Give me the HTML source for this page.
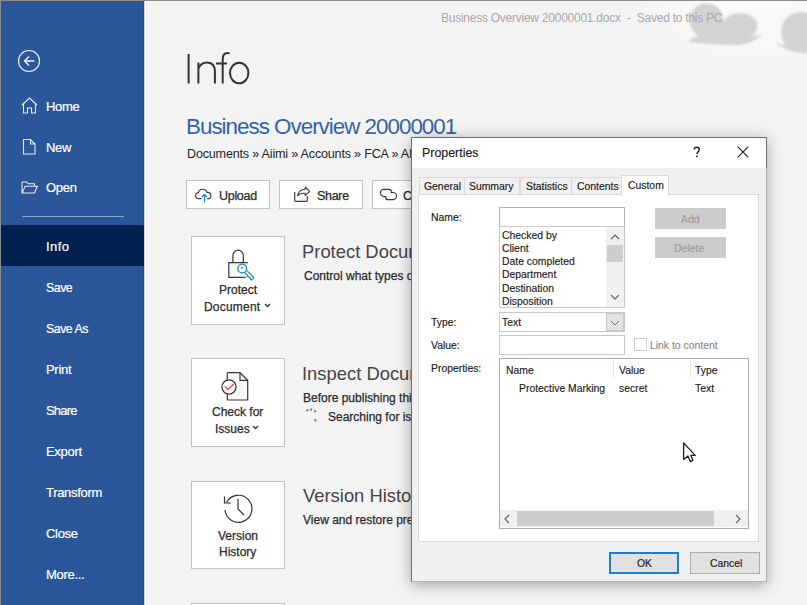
<!DOCTYPE html>
<html><head><meta charset="utf-8">
<style>
*{margin:0;padding:0;box-sizing:border-box}
html,body{width:807px;height:605px;overflow:hidden;background:#f3f3f3;font-family:"Liberation Sans",sans-serif}
.a{position:absolute;white-space:nowrap}
.t{position:absolute;white-space:nowrap;line-height:1}
#frame{position:absolute;left:0;top:0;width:807px;height:605px;border-top:1px solid #8c8c8c;border-left:1px solid #8c8c8c;pointer-events:none;z-index:50}
#side{position:absolute;left:0;top:0;width:144px;height:605px;background:#2b579a;border-right:1px solid #1d4c93}
#side .t{left:46px;color:#fff;font-size:13px;letter-spacing:-0.3px;-webkit-text-stroke:0.2px #fff}
.sel{position:absolute;left:0;top:225px;width:144px;height:41px;background:#002050}
.box{position:absolute;left:191px;width:94px;height:89px;background:#fff;border:1px solid #c3c3c3}
.bt{position:absolute;color:#2a2a2a;-webkit-text-stroke:0.25px #2a2a2a;font-size:12px;line-height:1;white-space:nowrap}
.h1{position:absolute;color:#454545;font-size:18.4px;line-height:1;white-space:nowrap}
.p{position:absolute;color:#2a2a2a;-webkit-text-stroke:0.25px #2a2a2a;font-size:12px;line-height:1;white-space:nowrap}
.btn{position:absolute;top:180px;height:29px;border:1px solid #c3c3c3;background:#fff}
#dlg{position:absolute;left:411px;top:137px;width:356px;height:445px;background:#f0f0f0;box-shadow:0 3px 14px rgba(0,0,0,.33);z-index:10}
#dlgb{position:absolute;left:0;top:0;width:356px;height:445px;border:1px solid #6e6e6e;border-right-color:#b4b4b4;border-bottom-color:#b4b4b4;z-index:5}
#dlg .t{font-size:10.4px;color:#1a1a1a;margin-top:1px;-webkit-text-stroke:0.15px currentColor}
</style></head><body>
<!-- background clouds -->
<svg class="a" style="left:600px;top:1px" width="207" height="110" viewBox="600 1 207 110">
  <defs><filter id="bl" x="-20%" y="-20%" width="140%" height="140%"><feGaussianBlur stdDeviation="0.8"/></filter>
  <radialGradient id="hz" cx="0.55" cy="0.25" r="0.6"><stop offset="0" stop-color="#fbfbfb"/><stop offset="0.6" stop-color="#f8f8f8"/><stop offset="1" stop-color="#f3f3f3" stop-opacity="0"/></radialGradient></defs>
  <ellipse cx="740" cy="30" rx="110" ry="75" fill="url(#hz)"/>
  <g fill="#d3d3d3" filter="url(#bl)">
    <circle cx="706.5" cy="20.5" r="17"/>
    <ellipse cx="740" cy="26" rx="17.5" ry="13"/>
    <ellipse cx="722" cy="30" rx="12" ry="8"/>
    <path d="M688 42Q698 32 720 35Q745 40 762 34Q752 46 730 45Q705 44 688 42z"/>
    <circle cx="801" cy="32" r="20"/>
    <path d="M775 43Q790 47 807 44V53Q790 54 775 43z"/>
  </g>
</svg>
<div class="t" style="left:441px;top:12px;font-size:12px;color:#a8a8a8;letter-spacing:-0.25px">Business Overview 20000001.docx&nbsp; - &nbsp;Saved to this PC</div>

<div id="side">
  <svg class="a" style="left:17px;top:49px" width="24" height="24" viewBox="0 0 24 24"><circle cx="12" cy="12" r="10.5" fill="none" stroke="#e8edf5" stroke-width="1.2"/><path d="M7.5 12h10M12 7.5l-4.5 4.5 4.5 4.5" fill="none" stroke="#eef2f8" stroke-width="1.3"/></svg>
  <svg class="a" style="left:21px;top:97px" width="17" height="17" viewBox="0 0 17 17"><path d="M1 8l7.5-7 7.5 7M2.5 6.5V16h4v-5h4v5h4V6.5" fill="none" stroke="#e4e9f2" stroke-width="1.1"/></svg>
  <div class="t" style="top:100px">Home</div>
  <svg class="a" style="left:22px;top:138px" width="15" height="17" viewBox="0 0 15 17"><path d="M1.5 1.5h7l4.5 4.5v10h-11.5z M8.5 1.5v4.5h4.5" fill="none" stroke="#e4e9f2" stroke-width="1.1"/></svg>
  <div class="t" style="top:141px">New</div>
  <svg class="a" style="left:21px;top:181px" width="17" height="13" viewBox="0 0 17 13"><path d="M1 1h4.5l1.8 1.8h6.2v2.5 M1 1v11h12.5l2.8-6.7H4.2L1 12" fill="none" stroke="#e4e9f2" stroke-width="1.1"/></svg>
  <div class="t" style="top:181px">Open</div>
  <div class="a" style="left:22px;top:216px;width:102px;height:1px;background:#8aa6cf"></div>
  <div class="sel"></div>
  <div class="t" style="top:240px;letter-spacing:0.4px">Info</div>
  <div class="t" style="top:282px;letter-spacing:-0.5px;font-size:12.4px">Save</div>
  <div class="t" style="top:323px;letter-spacing:-0.5px;font-size:12.4px">Save As</div>
  <div class="t" style="top:363px">Print</div>
  <div class="t" style="top:404px;letter-spacing:-0.8px">Share</div>
  <div class="t" style="top:445px">Export</div>
  <div class="t" style="top:486px">Transform</div>
  <div class="t" style="top:527px">Close</div>
  <div class="t" style="top:568px">More...</div>
</div>
<div class="a" style="left:144px;top:0;width:1px;height:605px;background:#c5d0e0"></div>
<div class="a" style="left:145px;top:0;width:1px;height:605px;background:#fff"></div>

<!-- Info title -->
<svg class="a" style="left:186px;top:50px" width="70" height="36" viewBox="0 0 70 36">
  <g fill="none" stroke="#333" stroke-width="2">
    <path d="M2.6 4v29.5"/>
    <path d="M12.4 12.5v21M12.4 18.5C14.2 14.8 17 12.6 20.8 12.6C26 12.6 28.9 15.4 28.9 21.2v12.3"/>
    <path d="M36.7 33.5V9.2C36.7 5 38.6 3 41.6 3c.9 0 1.5.2 2 .4M30 13.6h11"/>
    <ellipse cx="53.2" cy="23" rx="9.2" ry="10.3"/>
  </g>
</svg>
<div class="t" style="left:186px;top:116px;font-size:22.4px;color:#3563a6;letter-spacing:-1px">Business Overview 20000001</div>
<div class="t" style="left:187px;top:148px;font-size:12.6px;color:#262626;letter-spacing:-0.2px">Documents » Aiimi » Accounts » FCA » AI</div>

<div class="btn" style="left:186px;width:84px"></div>
<svg class="a" style="left:190px;top:182px" width="25" height="25" viewBox="0 0 25 25"><path d="M11.5 16.6H9A3 3 0 0 1 8.3 10.6A4.5 4.5 0 0 1 17 10.5A3 3 0 0 1 18.5 16.6H17.3" fill="none" stroke="#3a3a3a" stroke-width="1.15"/><path d="M14.5 20.5V12.6M12 15.1l2.5-2.5 2.5 2.5" fill="none" stroke="#1e88d0" stroke-width="1.4"/></svg>
<div class="bt" style="left:219px;top:190px;font-size:12.5px;color:#262626;letter-spacing:-0.3px">Upload</div>
<div class="btn" style="left:279px;width:84px"></div>
<svg class="a" style="left:290px;top:182px" width="25" height="25" viewBox="0 0 25 25"><path d="M4.75 10.1V18.6q0 .8.8.8H16.5q.8 0 .8-.8V14" fill="none" stroke="#3a3a3a" stroke-width="1.15"/><path d="M7.6 13.8C8.5 9.5 11 7.3 15.2 7.2V5L19.6 9.3L15.2 13.6V11.3C11.5 11 9 12 7.6 13.8Z" fill="none" stroke="#3a3a3a" stroke-width="1.1" stroke-linejoin="round"/></svg>
<div class="bt" style="left:317px;top:190px;font-size:12.5px;color:#262626;letter-spacing:-0.3px">Share</div>
<div class="btn" style="left:372px;width:84px"></div>
<svg class="a" style="left:378px;top:187px" width="22" height="15" viewBox="0 0 22 15"><g fill="none" stroke="#3a3a3a" stroke-width="1.2"><path d="M8.5 9.5H6A3.6 3.6 0 0 1 6 2.3h4.5a3.6 3.6 0 0 1 3.4 2.5"/><path d="M12.5 5.5H15a3.6 3.6 0 0 1 0 7.2h-4.5a3.6 3.6 0 0 1-3.4-2.5"/></g></svg>
<div class="bt" style="left:403px;top:190px;font-size:12.5px;color:#262626">Copy</div>

<!-- Protect -->
<div class="box" style="top:236px"></div>
<svg class="a" style="left:225px;top:247px" width="32" height="36" viewBox="0 0 32 36">
  <path d="M7.9 15.7V8.4a5.2 5.2 0 0 1 10.4 0v7.3" fill="none" stroke="#383838" stroke-width="1.2"/>
  <path d="M22.8 15.7H3.8v14.6h17" fill="#f7f7f7" stroke="#383838" stroke-width="1.2"/>
  <path d="M21.6 23.4L28.9 30.7L26.4 33.2L25 31.8L25.6 31.2L24.2 29.8L23.6 30.4L22.2 29L22.8 28.4L19.2 24.8" fill="#fff" stroke="#1e88d0" stroke-width="1.2" stroke-linejoin="round"/>
  <circle cx="17.2" cy="21.5" r="4.4" fill="#fff" stroke="#1e88d0" stroke-width="1.4"/>
  <circle cx="16.9" cy="20.8" r="1" fill="#1e88d0"/>
</svg>
<div class="bt" style="left:219px;top:284px">Protect</div>
<div class="bt" style="left:204px;top:301px;letter-spacing:0.2px">Document</div>
<svg class="a" style="left:264px;top:303px" width="7" height="5" viewBox="0 0 7 5"><path d="M1 1l2.5 2.5L6 1" fill="none" stroke="#333" stroke-width="1.3"/></svg>
<div class="h1" style="left:302px;top:243px">Protect Document</div>
<div class="p" style="left:304px;top:270px">Control what types of changes people can make to this document.</div>

<!-- Inspect -->
<div class="box" style="top:358px"></div>
<svg class="a" style="left:218px;top:370px" width="32" height="32" viewBox="0 0 32 32">
  <path d="M9.3 2.7H22L29.7 10.3V30H9.3z" fill="#f7f7f7" stroke="none"/>
  <path d="M9.3 2.7H22L29.7 10.3V30H9.3M22 2.7V10.3H29.7M9.3 2.7v7.5M9.3 24v6" fill="none" stroke="#383838" stroke-width="1.2"/>
  <circle cx="11" cy="17" r="7.1" fill="#f7f7f7" stroke="#383838" stroke-width="1.2"/>
  <path d="M6.9 16.4L10 19.6L15.8 14" fill="none" stroke="#e8474c" stroke-width="1.3"/>
</svg>
<div class="bt" style="left:212px;top:406px;letter-spacing:0px">Check for</div>
<div class="bt" style="left:215px;top:423px">Issues</div>
<svg class="a" style="left:252px;top:425px" width="7" height="5" viewBox="0 0 7 5"><path d="M1 1l2.5 2.5L6 1" fill="none" stroke="#333" stroke-width="1.3"/></svg>
<div class="h1" style="left:302px;top:365px">Inspect Document</div>
<div class="p" style="left:303px;top:392px">Before publishing this file, be aware that it contains:</div>
<svg class="a" style="left:304px;top:406px" width="16" height="18" viewBox="0 0 16 18"><g fill="#8a8a8a"><circle cx="3.4" cy="4.3" r="1.2"/><circle cx="7.2" cy="3.5" r="1.2"/><circle cx="11" cy="5.3" r="1.2"/><circle cx="11.3" cy="14.3" r="1.2"/></g></svg>
<div class="p" style="left:328px;top:411px">Searching for issues...</div>

<!-- Version -->
<div class="box" style="top:481px;height:88px"></div>
<svg class="a" style="left:220px;top:490px" width="36" height="36" viewBox="0 0 36 36">
  <path d="M6.5 12.5A13.5 13.5 0 1 1 5 20" fill="none" stroke="#333" stroke-width="1.2"/>
  <path d="M4.5 6.5v6.5H11" fill="none" stroke="#333" stroke-width="1.2"/>
  <path d="M18 9v10l6 6" fill="none" stroke="#333" stroke-width="1.2"/>
</svg>
<div class="bt" style="left:218px;top:530px">Version</div>
<div class="bt" style="left:219px;top:546px">History</div>
<div class="h1" style="left:303px;top:487px">Version History</div>
<div class="p" style="left:303px;top:514px">View and restore previous versions.</div>
<div class="box" style="top:603px"></div>

<!-- Dialog -->
<div id="dlg">
  <div class="a" style="left:0;top:0;width:356px;height:31px;background:#fff"></div><div id="dlgb"></div><div class="a" style="left:355px;top:0;width:1px;height:31px;background:#6e6e6e;z-index:6"></div>
  <div class="t" style="left:11px;top:9px;font-size:12.4px;color:#1a1a1a">Properties</div>
  <svg class="a" style="left:282px;top:9px" width="8" height="12" viewBox="0 0 8 12"><path d="M1.2 3.6C1.2 2 2.3 1.2 3.7 1.2 5.2 1.2 6.3 2.1 6.3 3.5 6.3 5.4 4 5.6 4 8.1" fill="none" stroke="#1a1a1a" stroke-width="1.4"/><circle cx="4" cy="10.4" r=".9" fill="#1a1a1a"/></svg>
  <svg class="a" style="left:326px;top:9px" width="12" height="12" viewBox="0 0 12 12"><path d="M.7.7l10.6 10.6M11.3.7L.7 11.3" stroke="#1a1a1a" stroke-width="1.1"/></svg>
  <!-- tabs -->
  <div class="a" style="left:7px;top:57px;width:341px;height:348px;background:#fff;border:1px solid #d9d9d9"></div>
  <div class="a" style="left:8px;top:40px;width:46px;height:18px;background:#f0f0f0;border:1px solid #d9d9d9"></div>
  <div class="t" style="left:13px;top:44px">General</div>
  <div class="a" style="left:53px;top:40px;width:56px;height:18px;background:#f0f0f0;border:1px solid #d9d9d9"></div>
  <div class="t" style="left:58px;top:44px">Summary</div>
  <div class="a" style="left:109px;top:40px;width:52px;height:18px;background:#f0f0f0;border:1px solid #d9d9d9"></div>
  <div class="t" style="left:115px;top:44px">Statistics</div>
  <div class="a" style="left:160px;top:40px;width:51px;height:18px;background:#f0f0f0;border:1px solid #d9d9d9"></div>
  <div class="t" style="left:166px;top:44px">Contents</div>
  <div class="a" style="left:210px;top:38px;width:48px;height:21px;background:#fff;border:1px solid #d9d9d9;border-bottom:none"></div>
  <div class="t" style="left:217px;top:43px">Custom</div>

  <div class="t" style="left:20px;top:75px">Name:</div>
  <div class="a" style="left:88px;top:70px;width:126px;height:20px;background:#fff;border:1px solid #b4b4b4"></div>
  <div class="a" style="left:88px;top:89px;width:126px;height:82px;background:#fff;border:1px solid #c8c8c8"></div>
  <div class="a" style="left:195px;top:90px;width:18px;height:80px;background:#f0f0f0"></div>
  <div class="a" style="left:196px;top:108px;width:16px;height:17px;background:#cdcdcd"></div>
  <svg class="a" style="left:199px;top:97px" width="10" height="6" viewBox="0 0 10 6"><path d="M1 5l4-4 4 4" fill="none" stroke="#606060" stroke-width="1.1"/></svg>
  <svg class="a" style="left:199px;top:157px" width="10" height="6" viewBox="0 0 10 6"><path d="M1 1l4 4 4-4" fill="none" stroke="#606060" stroke-width="1.1"/></svg>
  <div class="t" style="left:91px;top:93px">Checked by</div>
  <div class="t" style="left:91px;top:106px">Client</div>
  <div class="t" style="left:91px;top:119px">Date completed</div>
  <div class="t" style="left:91px;top:132px">Department</div>
  <div class="t" style="left:91px;top:146px">Destination</div>
  <div class="t" style="left:91px;top:159px">Disposition</div>

  <div class="a" style="left:244px;top:71px;width:71px;height:21px;background:#cccccc"></div>
  <div class="t" style="left:270px;top:77px;color:#9c9c9c">Add</div>
  <div class="a" style="left:244px;top:100px;width:71px;height:21px;background:#cccccc"></div>
  <div class="t" style="left:263px;top:106px;color:#9c9c9c">Delete</div>

  <div class="t" style="left:20px;top:180px">Type:</div>
  <div class="a" style="left:88px;top:175px;width:126px;height:20px;background:#fff;border:1px solid #c8c8c8"></div>
  <div class="t" style="left:91px;top:180px">Text</div>
  <div class="a" style="left:195px;top:176px;width:18px;height:18px;background:#e3e3e3;border:1px solid #c8c8c8"></div>
  <svg class="a" style="left:199px;top:183px" width="10" height="6" viewBox="0 0 10 6"><path d="M1 1l4 4 4-4" fill="none" stroke="#707070" stroke-width="1"/></svg>

  <div class="t" style="left:20px;top:203px">Value:</div>
  <div class="a" style="left:88px;top:198px;width:126px;height:20px;background:#fff;border:1px solid #c8c8c8"></div>
  <div class="a" style="left:223px;top:201px;width:13px;height:13px;background:#fff;border:1px solid #cfcfcf"></div>
  <div class="t" style="left:239px;top:203px;color:#8a8a8a">Link to content</div>

  <div class="t" style="left:20px;top:226px">Properties:</div>
  <div class="a" style="left:88px;top:221px;width:250px;height:171px;background:#fff;border:1px solid #adadb8"></div>
  <div class="t" style="left:95px;top:228px">Name</div>
  <div class="a" style="left:202px;top:223px;width:1px;height:18px;background:#e5e5e5"></div>
  <div class="t" style="left:208px;top:228px">Value</div>
  <div class="a" style="left:279px;top:223px;width:1px;height:18px;background:#e5e5e5"></div>
  <div class="t" style="left:284px;top:228px">Type</div>
  <div class="t" style="left:108px;top:246px">Protective Marking</div>
  <div class="t" style="left:208px;top:246px">secret</div>
  <div class="t" style="left:284px;top:246px">Text</div>
  <div class="a" style="left:89px;top:373px;width:248px;height:17px;background:#f0f0f0"></div>
  <div class="a" style="left:106px;top:374px;width:197px;height:15px;background:#cdcdcd"></div>
  <svg class="a" style="left:93px;top:377px" width="6" height="10" viewBox="0 0 6 10"><path d="M5 1L1 5l4 4" fill="none" stroke="#606060" stroke-width="1.1"/></svg>
  <svg class="a" style="left:324px;top:377px" width="6" height="10" viewBox="0 0 6 10"><path d="M1 1l4 4-4 4" fill="none" stroke="#606060" stroke-width="1.1"/></svg>

  <svg class="a" style="left:271px;top:304px" width="16" height="23" viewBox="0 0 16 23"><path d="M1.6 1.9V18.5L5.9 15L8.4 20.6L10.9 19.3L8.8 14.4H13.2Z" fill="#fff" stroke="#1a1a2a" stroke-width="1.3" stroke-linejoin="round"/></svg>

  <div class="a" style="left:198px;top:415px;width:70px;height:22px;background:#e1e1e1;border:2px solid #1a7fd4"></div>
  <div class="t" style="left:226px;top:421px">OK</div>
  <div class="a" style="left:279px;top:415px;width:70px;height:22px;background:#e1e1e1;border:1px solid #adadad"></div>
  <div class="t" style="left:299px;top:421px">Cancel</div>
</div>
<div id="frame"></div>
</body></html>
